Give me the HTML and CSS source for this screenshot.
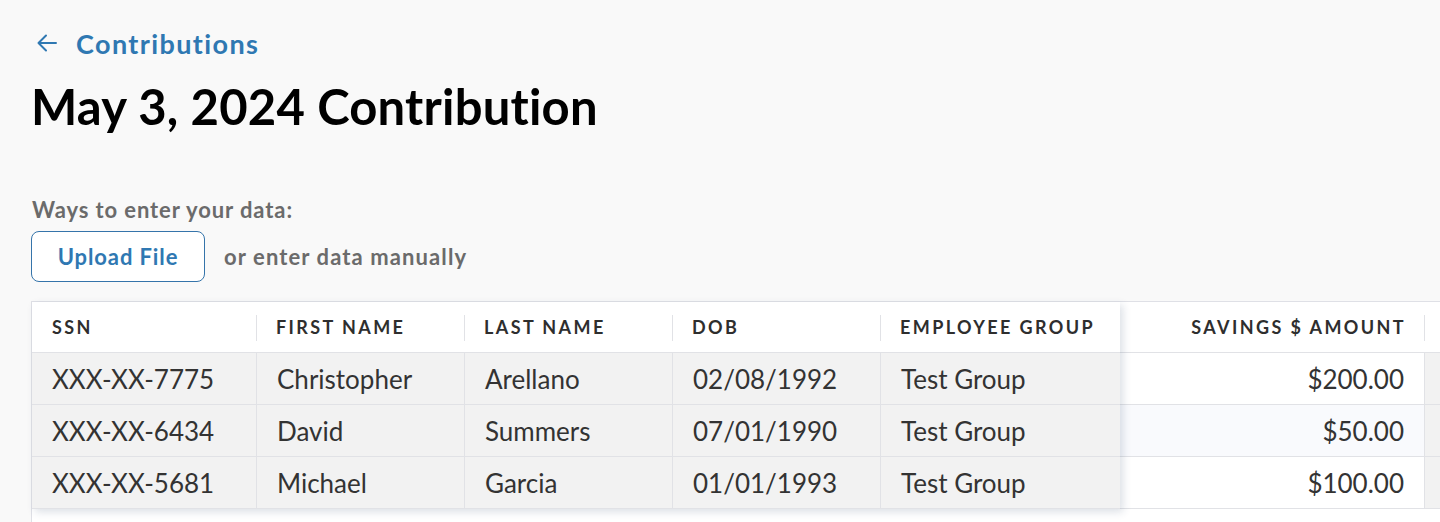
FILE: index.html
```html
<!DOCTYPE html>
<html>
<head>
    <title>May 3, 2024 Contribution</title>
    <link rel="stylesheet" href="styles.css">
</head>
<body>
    <main class="page">
        <a class="back-link" href="#">
            <svg class="back-icon" viewBox="0 0 24 24" width="24" height="24">
                <path d="M21 12H3.5M11 4.5L3.5 12l7.5 7.5" fill="none" stroke="currentColor" stroke-width="2" stroke-linecap="round" stroke-linejoin="round"/>
            </svg>
            <span>Contributions</span>
        </a>

        <h1 class="page-title">May 3, 2024 Contribution</h1>

        <section class="entry">
            <p class="entry-label">Ways to enter your data:</p>
            <div class="entry-actions">
                <button class="upload-btn">Upload File</button>
                <span class="entry-note">or enter data manually</span>
            </div>
        </section>

        <div class="grid">
            <!-- left pinned columns -->
            <div class="pinned">
                <div class="row head">
                    <div class="cell c-ssn">SSN</div>
                    <div class="cell c-name">First Name</div>
                    <div class="cell c-name">Last Name</div>
                    <div class="cell c-name">DOB</div>
                    <div class="cell c-group">Employee Group</div>
                </div>
                <div class="row">
                    <div class="cell c-ssn">XXX-XX-7775</div>
                    <div class="cell c-name">Christopher</div>
                    <div class="cell c-name">Arellano</div>
                    <div class="cell c-name">02/08/1992</div>
                    <div class="cell c-group">Test Group</div>
                </div>
                <div class="row">
                    <div class="cell c-ssn">XXX-XX-6434</div>
                    <div class="cell c-name">David</div>
                    <div class="cell c-name">Summers</div>
                    <div class="cell c-name">07/01/1990</div>
                    <div class="cell c-group">Test Group</div>
                </div>
                <div class="row">
                    <div class="cell c-ssn">XXX-XX-5681</div>
                    <div class="cell c-name">Michael</div>
                    <div class="cell c-name">Garcia</div>
                    <div class="cell c-name">01/01/1993</div>
                    <div class="cell c-group">Test Group</div>
                </div>
            </div>

            <!-- scrolling columns -->
            <div class="center">
                <div class="row head">
                    <div class="cell c-amount num">Savings $ Amount</div>
                    <div class="cell c-rest"></div>
                </div>
                <div class="row">
                    <div class="cell c-amount num">$200.00</div>
                    <div class="cell c-rest"></div>
                </div>
                <div class="row alt">
                    <div class="cell c-amount num">$50.00</div>
                    <div class="cell c-rest"></div>
                </div>
                <div class="row">
                    <div class="cell c-amount num">$100.00</div>
                    <div class="cell c-rest"></div>
                </div>
            </div>
        </div>
    </main>
</body>
</html>
```

FILE: styles.css
```css
body {
    margin: 0;
    background: #f9f9f9;
    font-family: Lato, "Noto Sans", sans-serif;
    color: #333;
    overflow: hidden;
}

.page {
    padding: 28px 0 0 31px;
}

.back-link {
    display: flex;
    align-items: center;
    gap: 17px;
    height: 30px;
    color: #2f78b2;
    text-decoration: none;
    font-size: 27px;
    font-weight: 700;
    letter-spacing: 1.4px;
}

.back-icon {
    margin-left: 4px;
}

.page-title {
    margin: 19px 0 0 0;
    font-size: 49px;
    line-height: 58px;
    font-weight: 700;
    letter-spacing: 0.2px;
    color: #000;
}

.entry-label {
    margin: 62px 0 0 1px;
    font-size: 22px;
    line-height: 26px;
    font-weight: 700;
    letter-spacing: 0.9px;
    color: #6b6b6b;
}

.entry-actions {
    display: flex;
    align-items: center;
    gap: 19px;
    margin-top: 8px;
}

.upload-btn {
    width: 174px;
    height: 51px;
    border: 1px solid #3574aa;
    border-radius: 8px;
    background: #fff;
    color: #2f78b2;
    font-family: inherit;
    font-size: 22px;
    font-weight: 700;
    letter-spacing: 0.9px;
}

.entry-note {
    font-size: 22px;
    font-weight: 700;
    letter-spacing: 1.1px;
    color: #6b6b6b;
}

/* data grid */
.grid {
    display: flex;
    align-items: flex-start;
    width: 1500px;
    height: 260px;
    margin-top: 19px;
    background: #fff;
    border-top: 1px solid #dfe0e6;
    border-left: 1px solid #dfe0e6;
}

.pinned {
    position: relative;
    z-index: 1;
    box-shadow: 3px 3px 8px rgba(40, 60, 100, 0.16);
}

.row {
    display: flex;
    height: 51px;
    border-bottom: 1px solid #e1e2e6;
}

.row.head {
    height: 50px;
    background: #fff;
}

.pinned .row:not(.head) {
    background: #f2f2f2;
}

.center .row.alt {
    background: #f9fafd;
}

.cell {
    display: flex;
    align-items: center;
    box-sizing: border-box;
    padding: 0 20px;
    font-size: 26px;
    color: #333;
    white-space: nowrap;
}

.row:not(.head) .cell + .cell {
    border-left: 1px solid #e1e2e6;
}

.head .cell {
    position: relative;
    font-size: 18px;
    font-weight: 700;
    text-transform: uppercase;
    letter-spacing: 2.4px;
    color: #2e2e2e;
}

.head .cell + .cell::before {
    content: "";
    position: absolute;
    left: 0;
    top: 13px;
    height: 26px;
    border-left: 1px solid #e1e2e6;
}

.center .head .c-amount::before {
    display: none;
}

.num {
    justify-content: flex-end;
}

.head .num {
    padding-right: 18px;
}

.c-ssn { width: 224px; }
.c-name { width: 208px; }
.c-group { width: 240px; }
.c-amount { width: 304px; }
.c-rest { width: 200px; }

.center .row:not(.head) .c-rest {
    background: #f2f2f2;
}
```
